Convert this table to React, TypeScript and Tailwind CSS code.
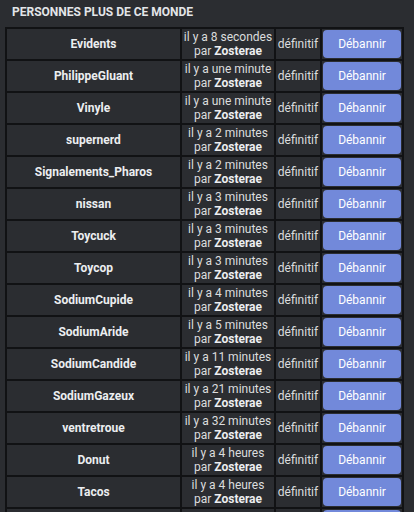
const rows: [string, string][] = [
  ["Evidents", "il y a 8 secondes"],
  ["PhilippeGluant", "il y a une minute"],
  ["Vinyle", "il y a une minute"],
  ["supernerd", "il y a 2 minutes"],
  ["Signalements_Pharos", "il y a 2 minutes"],
  ["nissan", "il y a 3 minutes"],
  ["Toycuck", "il y a 3 minutes"],
  ["Toycop", "il y a 3 minutes"],
  ["SodiumCupide", "il y a 4 minutes"],
  ["SodiumAride", "il y a 5 minutes"],
  ["SodiumCandide", "il y a 11 minutes"],
  ["SodiumGazeux", "il y a 21 minutes"],
  ["ventretroue", "il y a 32 minutes"],
  ["Donut", "il y a 4 heures"],
  ["Tacos", "il y a 4 heures"],
];

export default function App() {
  return (
    <div
      className="min-h-screen bg-[#2b2d31] text-[#dcddde] text-[12px]"
      style={{ fontFamily: "Roboto, 'Liberation Sans', sans-serif" }}
    >
      <div className="h-[512px] overflow-hidden pl-[5px] pr-[10px] pt-[5px]">
        <h2 className="pl-[7px] text-[12px] font-bold leading-[14px] text-[#e3e5e8]">
          PERSONNES PLUS DE CE MONDE
        </h2>
        <table className="mt-[8px] w-[399px] table-fixed border-separate border-spacing-[2px] bg-[#111214]">
          <colgroup>
            <col className="w-[173px]" />
            <col className="w-[92px]" />
            <col className="w-[44px]" />
            <col className="w-[80px]" />
          </colgroup>
          <tbody>
            {rows.map(([name, time]) => (
              <tr key={name} className="h-[30px]">
                <td className="bg-[#2b2d31] text-center font-bold text-[#eceef0]">
                  {name}
                </td>
                <td className="bg-[#2b2d31] px-0 py-[1px] text-center leading-[14px] whitespace-nowrap">
                  <div>{time}</div>
                  <div>
                    par <span className="font-bold text-[#eceef0]">Zosterae</span>
                  </div>
                </td>
                <td className="bg-[#2b2d31] text-center whitespace-nowrap">définitif</td>
                <td className="bg-[#2b2d31] p-[1px]">
                  <button className="h-[28px] w-full rounded-[4px] bg-[#7289da] text-[12px] text-white">
                    Débannir
                  </button>
                </td>
              </tr>
            ))}
            {/* next row is cut by the bottom of the view */}
            <tr className="h-[30px]">
              <td className="bg-[#2b2d31]"></td>
              <td className="bg-[#2b2d31]"></td>
              <td className="bg-[#2b2d31]"></td>
              <td className="bg-[#2b2d31] p-[1px]">
                <div className="h-[28px] w-full rounded-[4px] bg-[#7289da]"></div>
              </td>
            </tr>
          </tbody>
        </table>
      </div>
    </div>
  );
}
